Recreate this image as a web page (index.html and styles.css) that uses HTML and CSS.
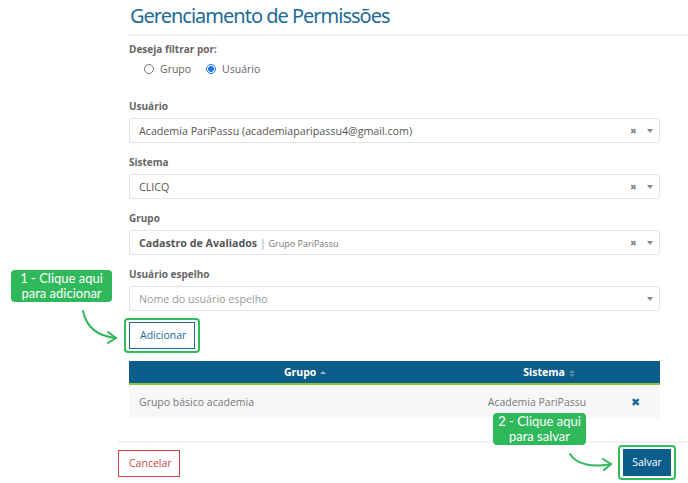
FILE: index.html
```html
<!DOCTYPE html>
<html lang="pt-BR">
<head>
<meta charset="utf-8">
<title>Gerenciamento de Permissões</title>
<link rel="stylesheet" href="styles.css">
</head>
<body>
<div class="page">
  <div class="main">
    <div class="header">
      <h1 class="title">Gerenciamento de Permissões</h1>
    </div>
    <div class="form">
      <div class="filter">
        <div class="label">Deseja filtrar por:</div>
        <div class="radios">
          <span class="radio"><span class="dot"></span>Grupo</span>
          <span class="radio checked"><span class="dot"></span>Usuário</span>
        </div>
      </div>

      <div class="field">
        <div class="label">Usuário</div>
        <div class="select">
          <span class="value">Academia PariPassu (academiaparipassu4@gmail.com)</span>
          <span class="clear">&#x2716;</span><span class="caret"></span>
        </div>
      </div>

      <div class="field">
        <div class="label">Sistema</div>
        <div class="select">
          <span class="value">CLICQ</span>
          <span class="clear">&#x2716;</span><span class="caret"></span>
        </div>
      </div>

      <div class="field">
        <div class="label">Grupo</div>
        <div class="select">
          <span class="value"><b class="strong">Cadastro de Avaliados</b> <span class="sep">|</span> <span class="sub">Grupo PariPassu</span></span>
          <span class="clear">&#x2716;</span><span class="caret"></span>
        </div>
      </div>

      <div class="field">
        <div class="label">Usuário espelho</div>
        <div class="select">
          <span class="value placeholder">Nome do usuário espelho</span>
          <span class="caret"></span>
        </div>
      </div>

      <div class="add-row">
        <span class="highlight"><button class="btn btn-outline">Adicionar</button></span>
      </div>

      <table class="table">
        <thead>
          <tr>
            <th class="col-group">Grupo <span class="sort up"></span></th>
            <th class="col-system">Sistema <span class="sort both"><i></i><i></i></span></th>
            <th class="col-act"></th>
          </tr>
        </thead>
        <tbody>
          <tr>
            <td class="left">Grupo básico academia</td>
            <td class="center sys">Academia PariPassu</td>
            <td class="center act"><span class="remove">&#x2716;</span></td>
          </tr>
        </tbody>
      </table>
    </div>

    <div class="footer">
      <button class="btn btn-cancel">Cancelar</button>
      <span class="highlight"><button class="btn btn-primary">Salvar</button></span>
    </div>
  </div>

  <div class="note note-1"><span class="line">1 - Clique aqui</span><span class="line">para adicionar</span></div>
  <div class="note note-2"><span class="line">2 - Clique aqui</span><span class="line">para salvar</span></div>

  <svg class="arrows" width="688" height="483" viewBox="0 0 688 483">
    <g fill="none" stroke="#2fb95a" stroke-width="2" stroke-linecap="round" stroke-linejoin="round">
      <path d="M83 311 C 86 326, 96 336, 116 338"/>
      <path d="M108 332 L116 338 L108 343"/>
      <path d="M570 454 C 576 464, 592 468, 611 464"/>
      <path d="M603 459 L611 464 L604 470"/>
    </g>
  </svg>
</div>
</body>
</html>
```

FILE: styles.css
```css
* { box-sizing: border-box; }
html, body { margin: 0; padding: 0; background: #fff; }
body {
  font-family: "Open Sans", "Noto Sans", sans-serif;
  color: #555;
  width: 688px;
  height: 483px;
  overflow: hidden;
}
.page { position: relative; width: 688px; height: 483px; }
.main { margin-left: 118px; width: 570px; }

.header {
  margin-left: 10px;
  border-bottom: 2px solid #f2f2f2;
  padding: 3px 0 5px 2px;
}
.title {
  margin: 0;
  font-family: "Noto Sans", "Open Sans", sans-serif;
  font-weight: 400;
  font-size: 20px;
  line-height: 26px;
  color: #1c6a98;
  letter-spacing: -1px;
}

.form { margin-left: 11px; width: 531px; }

.label {
  font-size: 10px;
  font-weight: 700;
  color: #666;
  line-height: 14px;
}
.filter { padding-top: 6px; }
.radios {
  display: flex;
  gap: 15px;
  padding-left: 15px;
  margin-top: 5px;
  font-size: 10.5px;
  line-height: 16px;
  color: #666;
}
.radio { display: inline-flex; align-items: center; gap: 6px; }
.radio .dot {
  width: 10px; height: 10px;
  border: 1px solid #777;
  border-radius: 50%;
  display: inline-block;
}
.radio.checked .dot {
  border-color: #1a73e8;
  background: radial-gradient(circle, #1a73e8 0 2.6px, #fff 3.2px);
}

.field { margin-top: 12px; }
.filter + .field { margin-top: 22px; }
.field .label { margin-bottom: 5px; }
.select {
  display: flex;
  align-items: center;
  height: 25px;
  border: 1px solid #e2e2e2;
  border-radius: 3px;
  padding: 0 6px 0 9px;
  font-size: 10.7px;
  color: #555;
}
.select .value { flex: 1; white-space: nowrap; }
.select .placeholder { color: #999; }
.strong { font-weight: 700; color: #555; }
.sep { color: #999; }
.sub { font-size: 9px; color: #777; }
.clear { font-size: 7.5px; color: #888; margin-right: 10px; }
.caret {
  width: 0; height: 0;
  border-left: 3px solid transparent;
  border-right: 3px solid transparent;
  border-top: 4px solid #888;
}

.add-row { margin-top: 7px; margin-left: -5px; line-height: 0; }
.highlight {
  display: inline-block;
  border: 2px solid #2fbc5b;
  border-radius: 4px;
  padding: 2px 3px;
  line-height: normal;
}
.btn {
  font-family: "Open Sans", "Noto Sans", sans-serif;
  font-size: 10.5px;
  line-height: 15px;
  background: #fff;
  border-radius: 0;
  cursor: pointer;
  display: block;
  margin: 0;
}
.btn-outline {
  border: 1px solid #1c6a98;
  color: #1c6a98;
  padding: 5px 10px;
  width: 66px;
}

.table {
  width: 531px;
  border-collapse: collapse;
  margin-top: 8px;
  font-size: 10.5px;
}
.table th {
  background: #0c5d8c;
  color: #fff;
  font-weight: 700;
  height: 23px;
  padding: 0;
  border-bottom: 2px solid #8cc63f;
  text-align: center;
}
.col-group { width: 352px; }
.col-system { width: 136px; }
.col-act { width: 43px; }
.table td {
  background: #f7f7f7;
  height: 34px;
  color: #777;
  padding: 0;
}
.table td.left { padding-left: 10px; }
.table td.center { text-align: center; }
.table td.sys { padding-right: 24px; }
.table td.act { padding-right: 6px; }
.remove { color: #1c6a98; font-size: 11px; }
.sort { display: inline-block; vertical-align: middle; margin-left: 1px; }
.sort.up {
  width: 0; height: 0;
  border-left: 3px solid transparent;
  border-right: 3px solid transparent;
  border-bottom: 3px solid #9fb8c8;
  margin-top: -2px;
}
.sort.both { display: inline-flex; flex-direction: column; gap: 1px; vertical-align: middle; }
.sort.both i {
  display: block; width: 0; height: 0;
  border-left: 3px solid transparent;
  border-right: 3px solid transparent;
}
.sort.both i:first-child { border-bottom: 3px solid #5f8aa6; }
.sort.both i:last-child { border-top: 3px solid #5f8aa6; }

.footer {
  margin-top: 23px;
  border-top: 2px solid #f2f2f2;
  padding-top: 2px;
  display: flex;
  justify-content: space-between;
  align-items: flex-start;
  padding-right: 12px;
}
.btn-cancel {
  border: 1px solid #c64a4a;
  color: #c64a4a;
  padding: 5px 10px;
  margin-top: 5px;
  width: 62px;
}
.btn-primary {
  border: 1px solid #0c5d8c;
  background: #0c5d8c;
  color: #fff;
  padding: 5px 8px;
  width: 48px;
}

.note {
  position: absolute;
  display: flex;
  flex-direction: column;
  align-items: center;
  background: #2fb95a;
  color: #fff;
  font-family: "Lato", "Open Sans", sans-serif;
  font-size: 13px;
  line-height: 15px;
  border-radius: 4px;
  padding: 1px 0;
  white-space: nowrap;
}
.note .line { display: block; }
.note-1 { left: 11px; top: 270px; width: 101px; }
.note-2 { left: 493px; top: 413px; width: 93px; }
.arrows { position: absolute; left: 0; top: 0; pointer-events: none; }
```
